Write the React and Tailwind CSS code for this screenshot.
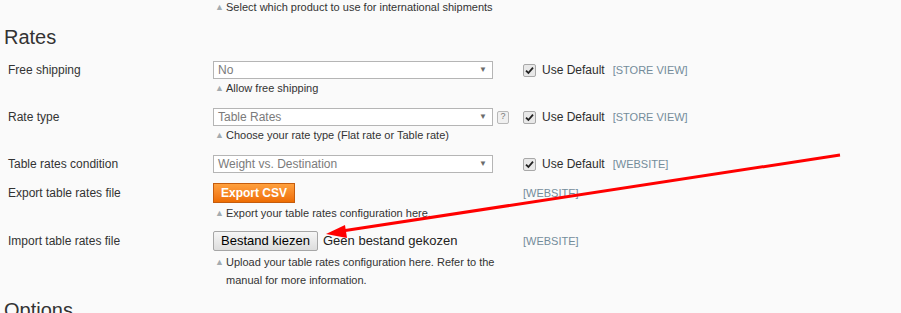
import React from 'react';

const Note = ({ children, className = '' }) => (
  <div className={`flex items-start text-[11px] leading-[18px] text-[#333] ${className}`}>
    <span className="w-[13px] shrink-0 pl-[2px] text-[9px] text-[#a3abb0]">▲</span>
    <span>{children}</span>
  </div>
);

const Select = ({ value }) => (
  <div className="flex h-[18px] w-[280px] items-center justify-between border border-[#b5b5b5] bg-white pl-[4px] pr-[5px] text-[12px] text-[#7b7b7b]">
    <span>{value}</span>
    <span className="text-[8px] text-[#6b6b6b]">▼</span>
  </div>
);

const UseDefault = ({ scope }) => (
  <div className="flex h-[18px] items-center">
    <span className="flex h-[13px] w-[13px] items-center justify-center rounded-[2px] border border-[#a8a8a8] bg-[#e8e8e8]">
      <svg width="9" height="9" viewBox="0 0 9 9">
        <path d="M1 4.6 L3.4 7 L8 1.6" stroke="#222" strokeWidth="1.8" fill="none" />
      </svg>
    </span>
    <span className="ml-[6px] text-[12px] text-[#2d2d2d]">Use Default</span>
    <span className="ml-[8px] text-[11px] text-[#748c9a]">{scope}</span>
  </div>
);

const Row = ({ label, labelH = 18, className = '', children, scope }) => (
  <div className={`flex items-start ${className}`}>
    <div
      className="w-[213px] shrink-0 pl-[8px] text-[12px] text-[#333]"
      style={{ lineHeight: `${labelH}px` }}
    >
      {label}
    </div>
    <div className="w-[310px] shrink-0">{children}</div>
    <div>{scope}</div>
  </div>
);

export default function App() {
  return (
    <div
      className="relative h-[313px] w-[901px] overflow-hidden bg-[#fafafa]"
      style={{ fontFamily: '"Liberation Sans", Arial, sans-serif' }}
    >
      <div className="pl-[213px]">
        <div className="flex items-start text-[11px] leading-[14px] text-[#333]">
          <span className="w-[13px] shrink-0 pl-[2px] text-[9px] text-[#a3abb0]">▲</span>
          <span>Select which product to use for international shipments</span>
        </div>
      </div>

      <h2 className="mt-[11px] pl-[4px] text-[20px] leading-[24px] text-[#333]">Rates</h2>

      <Row label="Free shipping" className="mt-[12px]" scope={<UseDefault scope="[STORE VIEW]" />}>
        <Select value="No" />
        <Note>Allow free shipping</Note>
      </Row>

      <Row label="Rate type" className="mt-[11px]" scope={<UseDefault scope="[STORE VIEW]" />}>
        <div className="flex items-center">
          <Select value="Table Rates" />
          <span className="ml-[4px] flex h-[13px] w-[12px] items-center justify-center rounded-[2px] border border-[#b8b8b8] bg-[#f0f0f0] text-[9px] text-[#777]">
            ?
          </span>
        </div>
        <Note>Choose your rate type (Flat rate or Table rate)</Note>
      </Row>

      <Row label="Table rates condition" className="mt-[11px]" scope={<UseDefault scope="[WEBSITE]" />}>
        <Select value="Weight vs. Destination" />
      </Row>

      <Row
        label="Export table rates file"
        labelH={20}
        className="mt-[10px]"
        scope={<div className="text-[11px] leading-[20px] text-[#748c9a]">[WEBSITE]</div>}
      >
        <button className="block h-[20px] w-[82px] border border-[#c55c0d] bg-gradient-to-b from-[#ffa03c] to-[#ee6d00] text-[12px] font-bold leading-[18px] text-white">
          Export CSV
        </button>
        <Note className="mt-[1px]">Export your table rates configuration here.</Note>
      </Row>

      <Row
        label="Import table rates file"
        labelH={20}
        className="mt-[9px]"
        scope={<div className="text-[11px] leading-[20px] text-[#748c9a]">[WEBSITE]</div>}
      >
        <div className="flex h-[20px] items-center">
          <button className="block h-[20px] w-[105px] rounded-[2px] border border-[#a6a6a6] bg-gradient-to-b from-[#f6f6f6] to-[#dddddd] text-[13px] leading-[18px] text-black">
            Bestand kiezen
          </button>
          <span className="ml-[5px] text-[13px] text-[#222]">Geen bestand gekozen</span>
        </div>
        <Note className="mt-[2px]">
          Upload your table rates configuration here. Refer to the
          <br />
          manual for more information.
        </Note>
      </Row>

      <h2 className="mt-[9px] pl-[4px] text-[20px] leading-[24px] text-[#333]">Options</h2>

      <svg className="pointer-events-none absolute left-0 top-0" width="901" height="313">
        <line x1="840" y1="155" x2="342" y2="231" stroke="#ff0000" strokeWidth="3" />
        <polygon points="326,234 345,225 347,238" fill="#ff0000" />
      </svg>
    </div>
  );
}
